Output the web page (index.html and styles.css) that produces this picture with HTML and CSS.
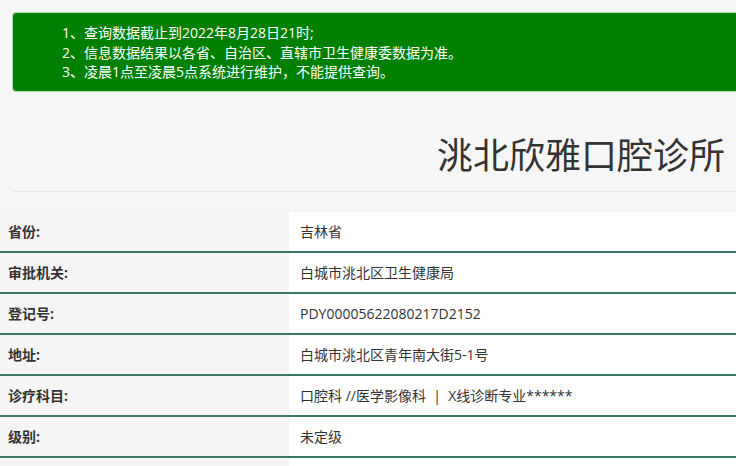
FILE: index.html
```html
<!DOCTYPE html>
<html lang="zh-CN">
<head>
<meta charset="utf-8">
<title>洮北欣雅口腔诊所</title>
<link rel="stylesheet" href="styles.css">
</head>
<body>
<div class="page">
  <div class="notice">
    <ol class="notice-list">
      <li>1、查询数据截止到2022年8月28日21时;</li>
      <li>2、信息数据结果以各省、自治区、直辖市卫生健康委数据为准。</li>
      <li>3、凌晨1点至凌晨5点系统进行维护，不能提供查询。</li>
    </ol>
  </div>
  <h1 class="title">洮北欣雅口腔诊所</h1>
  <hr class="divider">
  <table class="info">
    <tr><th>省份:</th><td>吉林省</td></tr>
    <tr><th>审批机关:</th><td>白城市洮北区卫生健康局</td></tr>
    <tr><th>登记号:</th><td>PDY00005622080217D2152</td></tr>
    <tr><th>地址:</th><td>白城市洮北区青年南大街5-1号</td></tr>
    <tr><th>诊疗科目:</th><td>口腔科 //医学影像科 &nbsp;|&nbsp; X线诊断专业******</td></tr>
    <tr><th>级别:</th><td>未定级</td></tr>
    <tr><th>&nbsp;</th><td>&nbsp;</td></tr>
  </table>
</div>
</body>
</html>
```

FILE: styles.css
```css
html, body {
  margin: 0;
  padding: 0;
  background: #f6f6f6;
  overflow: hidden;
}
body {
  font-family: "Open Sans", "Noto Sans CJK SC", sans-serif;
  color: #333;
  font-size: 14px;
}
.page {
  width: 760px;
  padding-top: 12px;
}
.notice {
  margin-left: 12px;
  background: #008000;
  border: 1px solid #b9d9a8;
  border-radius: 4px;
  padding: 10px 0 9px 0;
  color: #fff;
}
.notice-list {
  list-style: none;
  margin: 0;
  padding: 0 0 0 49px;
}
.notice-list li {
  line-height: 19.5px;
  font-size: 14px;
}
.title {
  margin: 39px 0 0 0;
  padding-right: 11px;
  width: 725px;
  text-align: right;
  font-weight: normal;
  font-size: 36px;
  line-height: 50px;
  color: #333;
}
.divider {
  margin: 10px 0 20px 13px;
  border: 0;
  border-top: 1px solid #e6e6e6;
  height: 0;
}
.info {
  border-collapse: collapse;
  width: 760px;
}
.info th, .info td {
  height: 39px;
  padding: 0;
  border-bottom: 2px solid #3a7a64;
  text-align: left;
  vertical-align: middle;
  font-size: 14px;
  color: #333;
}
.info th {
  width: 289px;
  padding-left: 8px;
  box-sizing: border-box;
  background: #f5f5f5;
  font-weight: bold;
}
.info td {
  background: #fff;
  padding-left: 11px;
}
```
